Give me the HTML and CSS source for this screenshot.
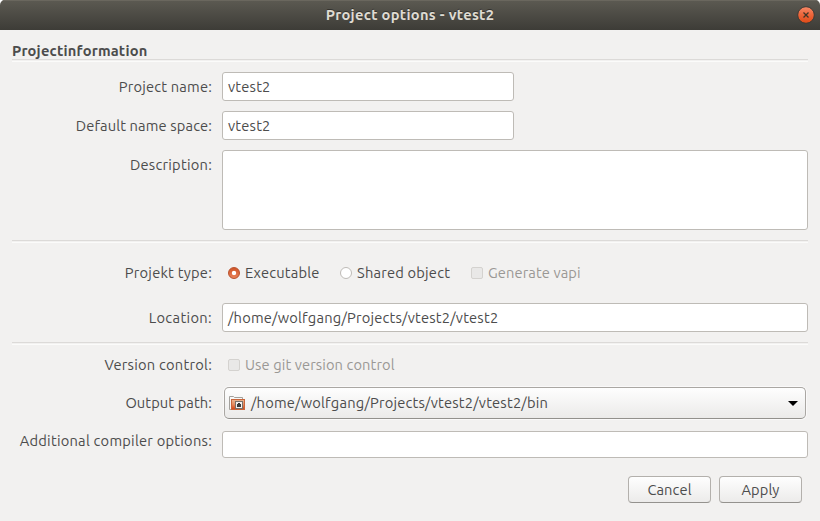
FILE: index.html
```html
<!DOCTYPE html>
<html lang="en">
<head>
<meta charset="utf-8">
<title>Project options - vtest2</title>
<link rel="stylesheet" href="styles.css">
</head>
<body>
<div class="window">
  <header class="titlebar">
    <h1 class="title">Project options - vtest2</h1>
    <button class="close" aria-label="Close">
      <svg width="18" height="18" viewBox="0 0 18 18">
        <defs><linearGradient id="closeFill" x1="0" y1="0" x2="0" y2="1"><stop offset="0" stop-color="#f68a68"/><stop offset=".5" stop-color="#ec6439"/><stop offset="1" stop-color="#de4a16"/></linearGradient></defs>
        <circle cx="9" cy="9" r="8.3" fill="url(#closeFill)" stroke="#3b3a35" stroke-width="1"/>
        <path d="M6.500 6.500l5 5M11.500 6.500l-5 5" stroke="#3f3527" stroke-width="1.3"/>
      </svg>
    </button>
  </header>
  <main class="content">
    <h2 class="heading"><span class="t-heading">Projectinformation</span></h2>
    <section class="group info">
      <div class="row"><label class="label"><span class="t-name">Project name:</span></label><div class="entry short"><span class="t-value">vtest2</span></div></div>
      <div class="row"><label class="label"><span class="t-space">Default name space:</span></label><div class="entry short"><span class="t-value">vtest2</span></div></div>
      <div class="row"><label class="label"><span class="t-desc">Description:</span></label><div class="entry area"></div></div>
    </section>
    <section class="group type">
      <div class="row options">
        <label class="label"><span class="t-type">Projekt type:</span></label>
        <div class="choices">
          <span class="choice"><i class="radio checked"></i><span class="t-exec">Executable</span></span>
          <span class="choice second"><i class="radio"></i><span class="t-shared">Shared object</span></span>
          <span class="choice third disabled"><i class="check"></i><span class="t-vapi">Generate vapi</span></span>
        </div>
      </div>
      <div class="row"><label class="label"><span class="t-loc">Location:</span></label><div class="entry"><span class="t-path">/home/wolfgang/Projects/vtest2/vtest2</span></div></div>
    </section>
    <section class="group output">
      <div class="row options">
        <label class="label"><span class="t-version">Version control:</span></label>
        <div class="choices"><span class="choice disabled"><i class="check"></i><span class="t-git">Use git version control</span></span></div>
      </div>
      <div class="row path-row">
        <label class="label"><span class="t-output">Output path:</span></label>
        <div class="combo">
          <svg class="folder" width="16" height="16" viewBox="0 0 16 16">
            <defs><linearGradient id="folderFill" x1="0" y1="0" x2="0" y2="1"><stop offset="0" stop-color="#eab691"/><stop offset=".5" stop-color="#e58c60"/><stop offset="1" stop-color="#d4400f"/></linearGradient></defs>
            <path d="M.5 13.500V.5h4l1 1h8v3" fill="#f8f7f6" stroke="#a3a19d"/>
            <path d="M.5 13.500h2" stroke="#a3a19d"/>
            <rect x="2.500" y="3.500" width="13" height="10" fill="url(#folderFill)" stroke="#c9653a"/>
            <rect x="6" y="5" width="8" height="8" fill="#77716b"/>
            <rect x="7" y="6" width="6" height="6" fill="#f3f1ef"/>
            <path d="M8 8h1V7h2v1h1v3H8z" fill="#3c3b39"/>
          </svg>
          <span class="combo-text"><span class="t-bin">/home/wolfgang/Projects/vtest2/vtest2/bin</span></span>
          <svg class="arrow" width="10" height="5" viewBox="0 0 10 5"><path d="M0 0h10L5 5z"/></svg>
        </div>
      </div>
      <div class="row"><label class="label compiler"><span class="t-compiler">Additional compiler options:</span></label><div class="entry thin"></div></div>
    </section>
    <footer class="actions"><button class="button"><span class="t-cancel">Cancel</span></button><button class="button"><span class="t-apply">Apply</span></button></footer>
  </main>
</div>
</body>
</html>
```
FILE: styles.css
```css
* { box-sizing: border-box; }
body { margin: 0; background: #fff; color: #4c4c4c; font: 14.667px/20px "Ubuntu", "Noto Sans", sans-serif; }
.window { width: 820px; height: 521px; background: #f2f1f0; border-radius: 5px 5px 0 0; overflow: hidden; }
.titlebar { position: relative; height: 30px; display: flex; align-items: center; justify-content: center; background: linear-gradient(#5c5a52, #3d3c37); box-shadow: inset 0 1px #6a675e; }
.title { margin: 0; font-size: 14.667px; letter-spacing: .3px; font-weight: 700; color: #dfdbd2; text-shadow: 0 -1px #33322e; }
.close { position: absolute; right: 5px; top: 6px; width: 18px; height: 18px; padding: 0; border: 0; background: none; }
.close svg { display: block; }
.content { padding: 0 12px; }
.heading { margin: 0; height: 29px; padding-top: 11px; font-size: 14.667px; line-height: 20px; }
.group { border-top: 1px solid #dcdad8; box-shadow: inset 0 1px #f2f1f0, inset 0 2px #fbfbfa; display: flex; flex-direction: column; }
.info { height: 181px; padding-top: 12px; gap: 10px; }
.type { height: 102px; padding-top: 22px; gap: 20px; }
.output { height: 118px; padding-top: 12px; gap: 12px; }
.row { display: grid; grid-template-columns: 200px 1fr; column-gap: 10px; }
.label { text-align: right; line-height: 20px; padding-top: 5px; white-space: nowrap; }
.options { height: 20px; }
.options .label { padding-top: 0; }
.entry { height: 29px; border: 1px solid #bebbb6; border-radius: 3px; background: #fff; padding: 4px 5px; line-height: 20px; white-space: nowrap; }
.short { width: 292px; }
.area { height: 80px; }
.thin { height: 27px; }
.choices { display: flex; padding-left: 6px; white-space: nowrap; }
.choice { display: flex; align-items: center; gap: 5px; width: 112px; }
.second { width: 131px; }
.disabled { color: #9a9895; }
.radio, .check { flex: none; width: 12px; height: 12px; border: 1px solid #bebbb7; border-radius: 50%; background: #fff; }
.check { border-color: #d4d2cf; border-radius: 2px; background: #e9e8e7; }
.checked { border-color: #b9502b; background: radial-gradient(circle, #fff 0 1.8px, transparent 2.6px), linear-gradient(#cf5427, #ea8259); }
.combo { display: flex; align-items: center; height: 32px; margin: 0 2px; padding: 0 7px 0 4px; border: 1px solid #aaa7a3; border-bottom-color: #92908c; border-radius: 5px; background: linear-gradient(#fefefe, #ebeae9); box-shadow: 0 0 0 1px #faf9f9; }
.path-row .label { padding-top: 6px; }
.folder { margin: 2px 6px 0 0; }
.combo-text { flex: 1; white-space: nowrap; }
.compiler { padding-top: 0; }
.actions { display: flex; justify-content: flex-end; gap: 8px; padding: 16px 6px 0 0; }
.button { width: 83px; height: 27px; padding: 0; border: 1px solid #b3b0ac; border-bottom-color: #94928e; border-radius: 4px; background: linear-gradient(#fefefe, #ecebea); font: inherit; color: inherit; }

/* Per-string tracking */
.t-heading, .t-value, .t-exec, .t-path, .t-bin, .t-name, .t-shared { letter-spacing: .2px; }
.t-desc, .t-type, .t-version, .t-compiler { letter-spacing: .24px; }
.t-loc { letter-spacing: .35px; }
.t-space { letter-spacing: .13px; }
.t-output, .t-vapi, .t-git, .t-cancel, .t-apply { letter-spacing: .1px; }
```
